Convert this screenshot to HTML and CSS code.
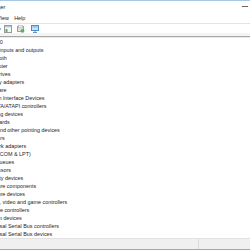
FILE: index.html
```html
<!DOCTYPE html>
<html lang="en">

<head>
    <meta charset="UTF-8">
    <title>Device Manager</title>
    <link rel="stylesheet" href="styles.css">
</head>

<body>
    <div class="window">
        <div class="titlebar">
            <span class="title">Device Manager</span>
            <span class="min"></span>
        </div>
        <div class="menubar">
            <span>File</span>
            <span>Action</span>
            <span>View</span>
            <span>Help</span>
        </div>
        <div class="toolbar">
            <!-- forward -->
            <svg class="tb tb-fwd" width="8" height="8" viewBox="0 0 8 8">
                <path d="M1 4h5M4 1.5l2.5 2.5L4 6.5" fill="none" stroke="#7fa5cf" stroke-width="1.1"/>
            </svg>
            <!-- properties -->
            <svg class="tb tb-props" width="8" height="8" viewBox="0 0 8 8">
                <rect x="0.5" y="0.5" width="7" height="7" fill="#f6f6f6" stroke="#9a9a9a"/>
                <rect x="1" y="1" width="6" height="1.3" fill="#b3c8de"/>
                <rect x="1.5" y="4" width="2" height="3" fill="#5cb25c"/>
            </svg>
            <!-- update driver -->
            <svg class="tb tb-update" width="8" height="8" viewBox="0 0 8 8">
                <rect x="0.5" y="1.5" width="6" height="5" fill="#e0e0e0" stroke="#a0a0a0"/>
                <rect x="1.5" y="0.5" width="4" height="2" fill="#f4f4f4" stroke="#b0b0b0" stroke-width="0.6"/>
                <circle cx="5.5" cy="5.8" r="1.9" fill="#56b356"/>
            </svg>
            <!-- scan -->
            <svg class="tb tb-scan" width="8" height="8" viewBox="0 0 8 8">
                <rect x="0.5" y="0.5" width="7" height="5" fill="#cfe3f5" stroke="#4a8bd0"/>
                <rect x="1.5" y="1.5" width="5" height="1" fill="#7aaee0"/>
                <path d="M4 5.5v1.5M2 7.5h4" stroke="#4a8bd0" stroke-width="0.9"/>
            </svg>
        </div>
        <div class="tree">
            <ul>
                <li class="root"><span>DESKTOP-QH5L1O0</span></li>
                <li>Audio inputs and outputs</li>
                <li>Bluetooth</li>
                <li>Computer</li>
                <li>Disk drives</li>
                <li>Display adapters</li>
                <li>Firmware</li>
                <li>Human Interface Devices</li>
                <li>IDE ATA/ATAPI controllers</li>
                <li>Imaging devices</li>
                <li>Keyboards</li>
                <li>Mice and other pointing devices</li>
                <li>Monitors</li>
                <li>Network adapters</li>
                <li>Ports (COM &amp; LPT)</li>
                <li>Print queues</li>
                <li>Processors</li>
                <li>Security devices</li>
                <li>Software components</li>
                <li>Software devices</li>
                <li>Sound, video and game controllers</li>
                <li>Storage controllers</li>
                <li>System devices</li>
                <li>Universal Serial Bus controllers</li>
                <li>Universal Serial Bus devices</li>
            </ul>
        </div>
        <div class="statusbar">
            <div class="cell cell-main"></div>
            <div class="cell"></div>
        </div>
        <div class="desktop"></div>
    </div>
</body>

</html>
```

FILE: styles.css
```css
* {
    padding: 0;
    margin: 0;
    list-style: none;
    box-sizing: border-box;
}

body {
    width: 250px;
    height: 250px;
    overflow: hidden;
    background: #fff;
    color: #262626;
    font-family: "Liberation Sans", Arial, sans-serif;
    font-size: 5.4px;
}

.window {
    display: flex;
    flex-direction: column;
    height: 250px;
    border-top: 1px solid #a7c9e6;
}

/* title bar */
.titlebar {
    height: 11px;
    display: flex;
    align-items: center;
    justify-content: space-between;
}

.title {
    margin-left: -34px;
    white-space: nowrap;
}

.min {
    width: 6px;
    height: 1px;
    background: #666;
    margin-right: 2px;
}

/* menu */
.menubar {
    height: 12px;
    display: flex;
    align-items: center;
    gap: 5.3px;
    margin-left: -37px;
    border-bottom: 1px solid #e3e3e3;
    white-space: nowrap;
}

/* toolbar */
.toolbar {
    height: 13px;
    display: flex;
    align-items: center;
    padding-bottom: 2px;
    background: linear-gradient(#fff 9px, #f4f4f4 9px);
    border-bottom: 1px solid #a6a6a6;
}

.tb {
    flex: none;
    display: block;
}

.tb-fwd {
    margin-left: -6px;
}

.tb-props {
    margin-left: 2px;
}

.tb-update {
    margin-left: 5px;
}

.tb-scan {
    margin-left: 6px;
}

/* tree */
.tree {
    flex: 1;
    overflow: hidden;
    border-top: 1px solid #ececec;
}

.tree ul {
    margin-left: -16px;
}

.tree li {
    height: 8px;
    line-height: 8px;
    white-space: nowrap;
}

.tree li.root span {
    display: inline-block;
    margin-left: -33px;
}

/* status bar */
.statusbar {
    height: 11px;
    display: flex;
    background: #f0f0f0;
    border-top: 1px solid #e2e2e2;
}

.cell {
    flex: 1;
}

.cell-main {
    flex: none;
    width: 199px;
    border-right: 1px solid #dcdcdc;
}

.desktop {
    height: 1px;
    background: #a4a89d;
}
```
